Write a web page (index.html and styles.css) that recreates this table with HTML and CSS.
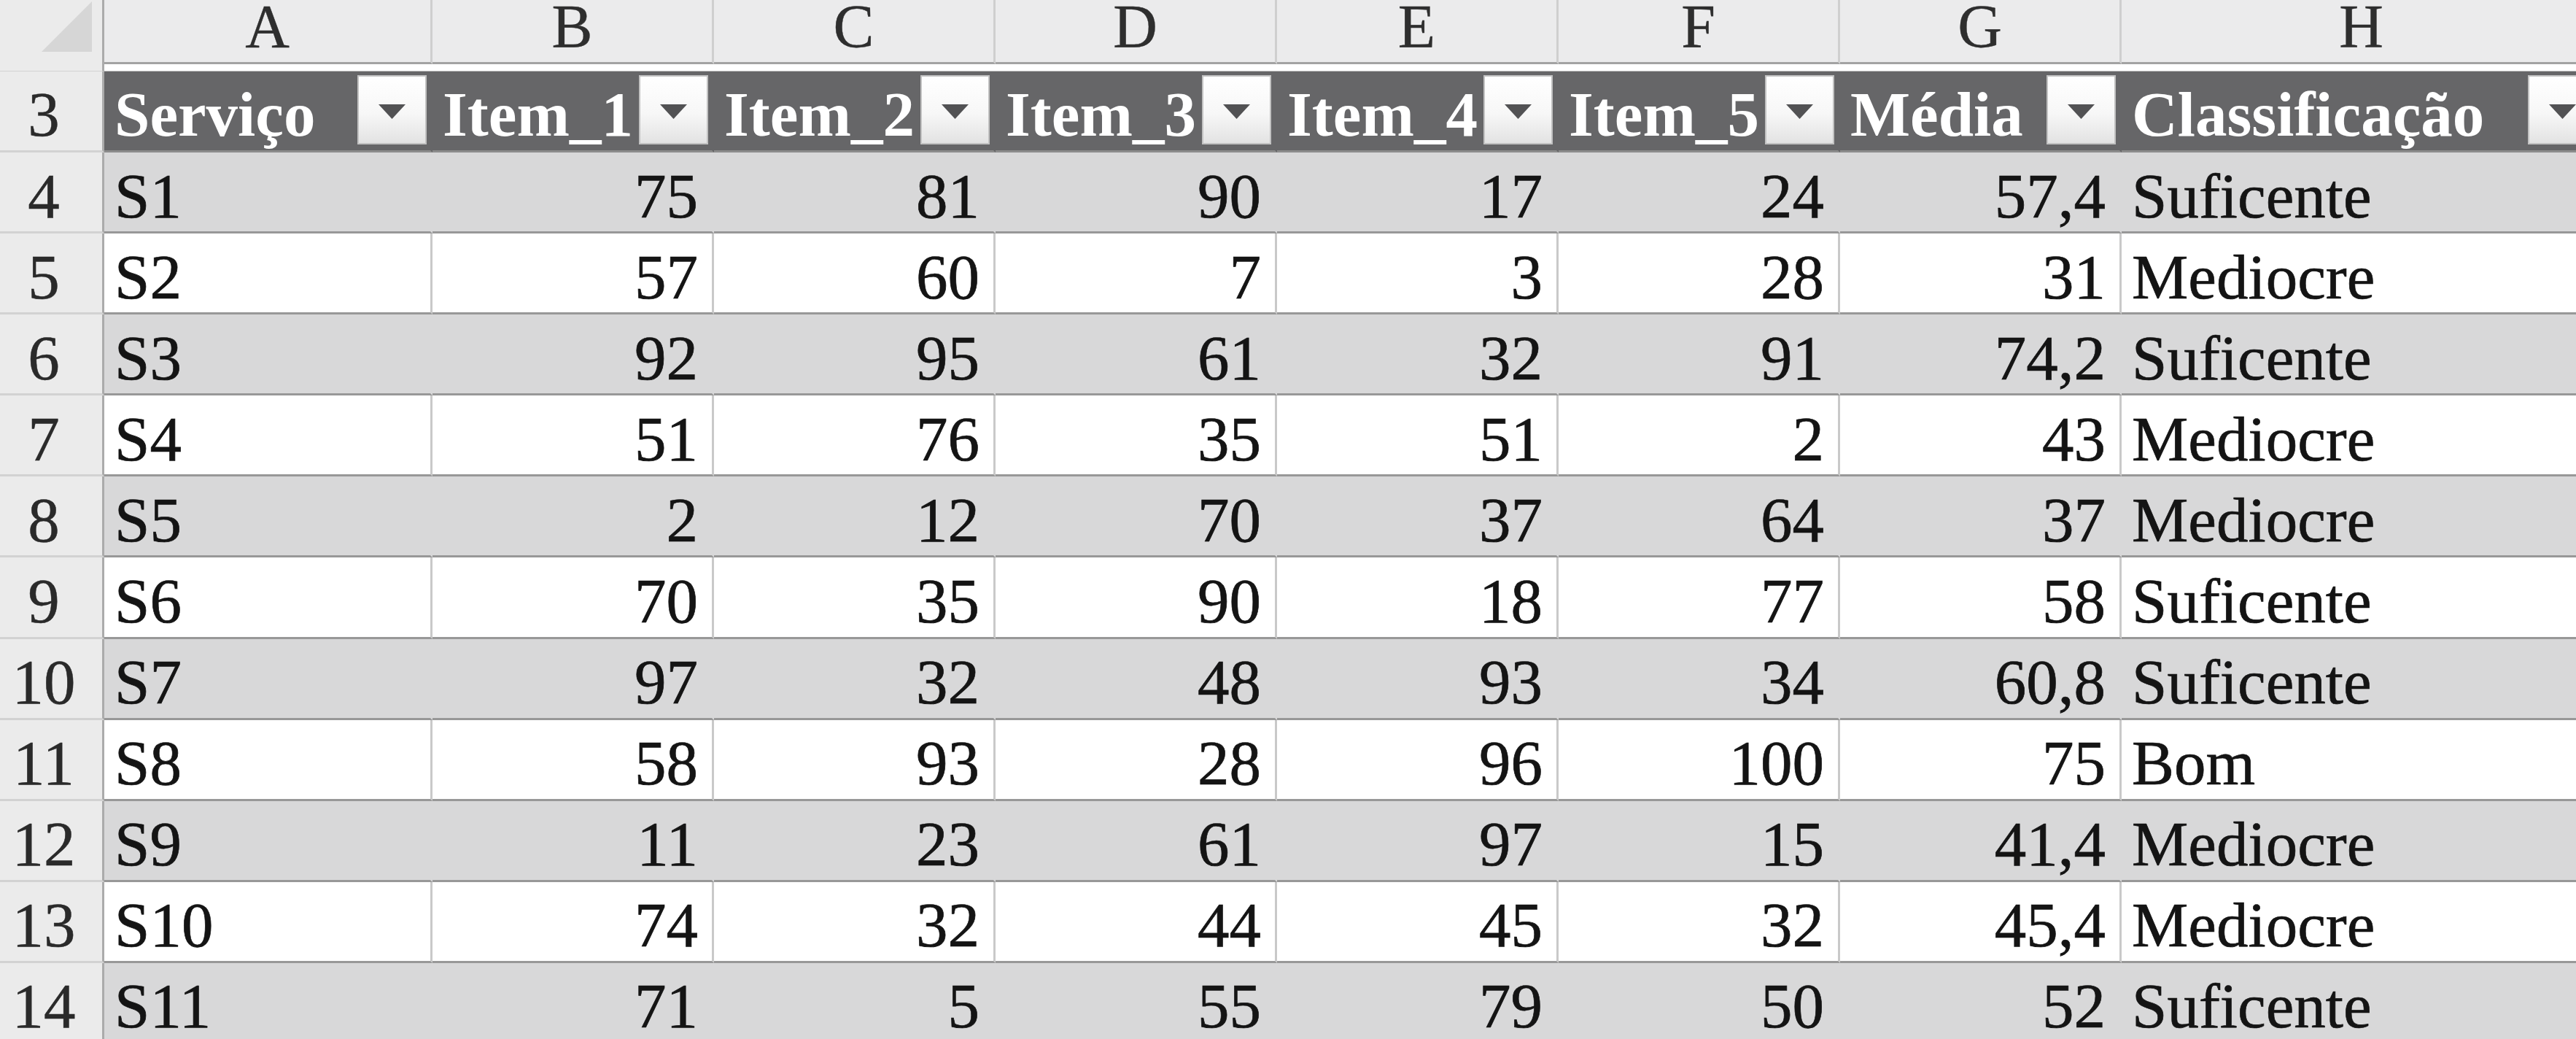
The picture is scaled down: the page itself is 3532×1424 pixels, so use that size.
FILE: index.html
```html
<!DOCTYPE html>
<html lang="pt">
<head>
<meta charset="utf-8">
<title>Planilha</title>
<link rel="stylesheet" href="styles.css">
</head>
<body>
<div class="sheet">
  <div class="top">
    <div class="corner"><svg class="corner-tri" width="69" height="69" viewBox="0 0 69 69"><polygon points="69,0 69,69 0,69" fill="#d6d6d6"/></svg></div>
    <div class="letter">A</div>
    <div class="letter">B</div>
    <div class="letter">C</div>
    <div class="letter">D</div>
    <div class="letter">E</div>
    <div class="letter">F</div>
    <div class="letter">G</div>
    <div class="letter">H</div>
    <div class="strip"></div>
  </div>

  <div class="row thead">
    <div class="rh">3</div>
    <div class="th"><span class="label">Serviço</span><span class="filter"><svg width="37" height="20" viewBox="0 0 37 20"><polygon points="0,0 37,0 18.5,20" fill="#525254"/></svg></span></div>
    <div class="th"><span class="label">Item_1</span><span class="filter"><svg width="37" height="20" viewBox="0 0 37 20"><polygon points="0,0 37,0 18.5,20" fill="#525254"/></svg></span></div>
    <div class="th"><span class="label">Item_2</span><span class="filter"><svg width="37" height="20" viewBox="0 0 37 20"><polygon points="0,0 37,0 18.5,20" fill="#525254"/></svg></span></div>
    <div class="th"><span class="label">Item_3</span><span class="filter"><svg width="37" height="20" viewBox="0 0 37 20"><polygon points="0,0 37,0 18.5,20" fill="#525254"/></svg></span></div>
    <div class="th"><span class="label">Item_4</span><span class="filter"><svg width="37" height="20" viewBox="0 0 37 20"><polygon points="0,0 37,0 18.5,20" fill="#525254"/></svg></span></div>
    <div class="th"><span class="label">Item_5</span><span class="filter"><svg width="37" height="20" viewBox="0 0 37 20"><polygon points="0,0 37,0 18.5,20" fill="#525254"/></svg></span></div>
    <div class="th"><span class="label">Média</span><span class="filter"><svg width="37" height="20" viewBox="0 0 37 20"><polygon points="0,0 37,0 18.5,20" fill="#525254"/></svg></span></div>
    <div class="th"><span class="label">Classificação</span><span class="filter"><svg width="37" height="20" viewBox="0 0 37 20"><polygon points="0,0 37,0 18.5,20" fill="#525254"/></svg></span></div>
  </div>

  <div class="row band">
    <div class="rh">4</div><div class="td">S1</div><div class="td num">75</div><div class="td num">81</div><div class="td num">90</div><div class="td num">17</div><div class="td num">24</div><div class="td num">57,4</div><div class="td">Suficente</div>
  </div>
  <div class="row plain">
    <div class="rh">5</div><div class="td">S2</div><div class="td num">57</div><div class="td num">60</div><div class="td num">7</div><div class="td num">3</div><div class="td num">28</div><div class="td num">31</div><div class="td">Mediocre</div>
  </div>
  <div class="row band">
    <div class="rh">6</div><div class="td">S3</div><div class="td num">92</div><div class="td num">95</div><div class="td num">61</div><div class="td num">32</div><div class="td num">91</div><div class="td num">74,2</div><div class="td">Suficente</div>
  </div>
  <div class="row plain">
    <div class="rh">7</div><div class="td">S4</div><div class="td num">51</div><div class="td num">76</div><div class="td num">35</div><div class="td num">51</div><div class="td num">2</div><div class="td num">43</div><div class="td">Mediocre</div>
  </div>
  <div class="row band">
    <div class="rh">8</div><div class="td">S5</div><div class="td num">2</div><div class="td num">12</div><div class="td num">70</div><div class="td num">37</div><div class="td num">64</div><div class="td num">37</div><div class="td">Mediocre</div>
  </div>
  <div class="row plain">
    <div class="rh">9</div><div class="td">S6</div><div class="td num">70</div><div class="td num">35</div><div class="td num">90</div><div class="td num">18</div><div class="td num">77</div><div class="td num">58</div><div class="td">Suficente</div>
  </div>
  <div class="row band">
    <div class="rh">10</div><div class="td">S7</div><div class="td num">97</div><div class="td num">32</div><div class="td num">48</div><div class="td num">93</div><div class="td num">34</div><div class="td num">60,8</div><div class="td">Suficente</div>
  </div>
  <div class="row plain">
    <div class="rh">11</div><div class="td">S8</div><div class="td num">58</div><div class="td num">93</div><div class="td num">28</div><div class="td num">96</div><div class="td num">100</div><div class="td num">75</div><div class="td">Bom</div>
  </div>
  <div class="row band">
    <div class="rh">12</div><div class="td">S9</div><div class="td num">11</div><div class="td num">23</div><div class="td num">61</div><div class="td num">97</div><div class="td num">15</div><div class="td num">41,4</div><div class="td">Mediocre</div>
  </div>
  <div class="row plain">
    <div class="rh">13</div><div class="td">S10</div><div class="td num">74</div><div class="td num">32</div><div class="td num">44</div><div class="td num">45</div><div class="td num">32</div><div class="td num">45,4</div><div class="td">Mediocre</div>
  </div>
  <div class="row band">
    <div class="rh">14</div><div class="td">S11</div><div class="td num">71</div><div class="td num">5</div><div class="td num">55</div><div class="td num">79</div><div class="td num">50</div><div class="td num">52</div><div class="td">Suficente</div>
  </div>
</div>
</body>
</html>
```

FILE: styles.css
```css
* { box-sizing: border-box; }

html, body {
  margin: 0;
  padding: 0;
  width: 3532px;
  height: 1424px;
  overflow: hidden;
  background: #ffffff;
}

.sheet {
  --cols: 143px 450px 386px 386px 386px 386px 386px 386px 660px;
  font-family: "Liberation Serif", "Times New Roman", serif;
  font-size: 87px;
  color: #141414;
  width: 3700px;
}

/* column header area */
.top {
  display: grid;
  grid-template-columns: var(--cols);
  grid-template-rows: 88px 10px;
}

.corner {
  grid-row: 1 / span 2;
  grid-column: 1;
  background: #ebebeb;
  border-right: 3px solid #ababab;
  border-bottom: 1px solid #d3d3d3;
  display: flex;
  justify-content: flex-end;
  align-items: flex-start;
  padding: 2px 14px 0 0;
}

.corner-tri { display: block; }

.letter {
  grid-row: 1;
  background: #ebebec;
  border-right: 3px solid #cfcfcf;
  border-bottom: 3px solid #a3a3a3;
  text-align: center;
  font-size: 84px;
  line-height: 74px;
  color: #2e2e2e;
  -webkit-text-stroke: 0.4px #2e2e2e;
}

.strip {
  grid-row: 2;
  grid-column: 2 / -1;
  background: #ffffff;
  border-bottom: 1px solid #bdbdbd;
}

/* rows */
.row {
  display: grid;
  grid-template-columns: var(--cols);
  height: 111.1px;
}

.rh {
  background: #ebebeb;
  border-right: 3px solid #ababab;
  border-bottom: 3px solid #d2d2d2;
  text-align: center;
  padding: 11.5px 20px 0 0;
  line-height: 96px;
  color: #2a2a2a;
  white-space: nowrap;
  -webkit-text-stroke: 0.5px #2a2a2a;
}

.thead { height: 111px; }

.thead .rh { padding-top: 11px; }

.th {
  display: flex;
  align-items: flex-start;
  background: #666668;
  border-right: 3px solid #666668;
  border-bottom: 3px solid #8c8c8c;
  padding: 5px 5px 0 14px;
  color: #ffffff;
  font-weight: bold;
  min-width: 0;
}

.label {
  padding-top: 6px;
  line-height: 96px;
  white-space: nowrap;
  overflow: hidden;
  min-width: 0;
}

.filter {
  margin-left: auto;
  flex: 0 0 95px;
  width: 95px;
  height: 95px;
  border: 2px solid #c2c2c2;
  background: linear-gradient(#ffffff 0%, #f7f7f7 55%, #e3e3e3 100%);
  display: flex;
  align-items: center;
  justify-content: center;
  padding-top: 5px;
}

.filter svg { display: block; }

.td {
  border-bottom: 3px solid #989898;
  border-right: 3px solid #c9c9c9;
  padding: 11.5px 14px 0 14px;
  line-height: 96px;
  white-space: nowrap;
  overflow: hidden;
  -webkit-text-stroke: 0.7px #141414;
}

.td.num {
  text-align: right;
  padding-right: 19px;
}

.band .td {
  background: #d8d8d9;
  border-right-color: #d8d8d9;
}

.plain .td {
  background: #ffffff;
}
```
